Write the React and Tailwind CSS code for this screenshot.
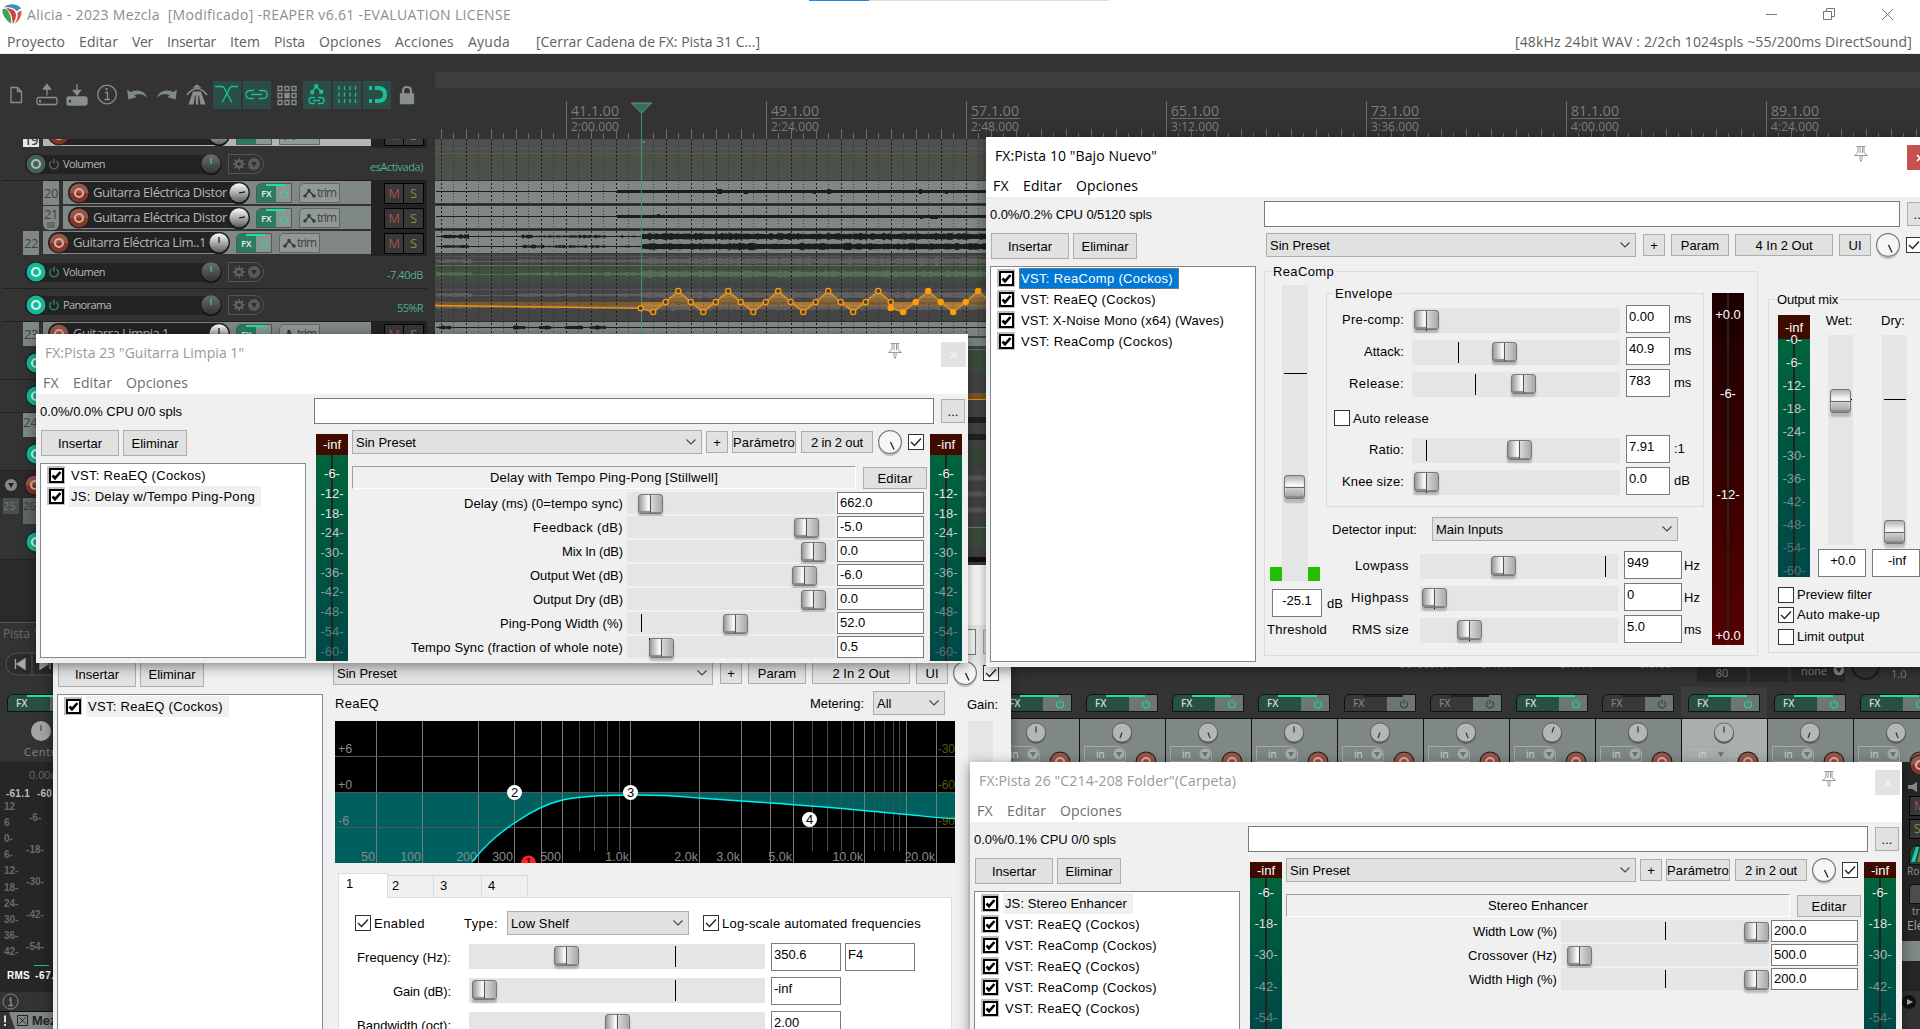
import React, { useLayoutEffect, useRef } from "react";

const ui = "font-['Open_Sans','Noto_Sans',sans-serif]";
const w32 = "font-['Liberation_Sans',Arial,sans-serif]";

/* Single-line text whose tracking is adjusted so that it spans w pixels. */
function T({ w, className = "", children }) {
  const ref = useRef(null);
  useLayoutEffect(() => {
    const el = ref.current;
    if (!w || !el) return;
    el.style.letterSpacing = "0px";
    const natural = el.getBoundingClientRect().width;
    el.style.letterSpacing = `${(w - natural) / el.textContent.length}px`;
  }, [w, children]);
  return (
    <span ref={ref} className={`inline-block shrink-0 whitespace-pre ${className}`}>
      {children}
    </span>
  );
}

function rng(seed) {
  let s = seed;
  return () => {
    s = (s * 16807) % 2147483647;
    return s / 2147483647;
  };
}

function wave(x0, x1, cy, amp, seed, min = 0.4) {
  const r = rng(seed);
  const top = [];
  const bottom = [];
  for (let x = x0; x <= x1; x += 2) {
    const a = amp * (min + (1 - min) * r() * r());
    top.push(`${x},${cy - a}`);
    bottom.unshift(`${x},${cy + a}`);
  }
  return [...top, ...bottom].join(" ");
}

/* ---------- Windows-style controls ---------- */

function Btn({ className = "", children }) {
  return (
    <button className={`flex shrink-0 items-center justify-center overflow-hidden border border-[#adadad] bg-[#e1e1e1] text-[13px] leading-none whitespace-nowrap text-black ${className}`}>
      {children}
    </button>
  );
}

function Select({ className = "", children }) {
  return (
    <div className={`flex h-6 shrink-0 items-center justify-between border border-[#adadad] bg-[#e1e1e1] pr-1 pl-[3px] text-[13px] leading-none text-black ${className}`}>
      {children}
      <svg className="h-3 w-3" viewBox="0 0 12 12" fill="none" stroke="#444" strokeWidth="1.1">
        <path d="M1.5 3.5 6 8l4.500-4.500" />
      </svg>
    </div>
  );
}

function Check({ on, className = "" }) {
  return (
    <span className={`flex h-4 w-4 shrink-0 items-center justify-center border border-[#333] bg-white ${className}`}>
      {on && (
        <svg className="h-[14px] w-[14px]" viewBox="0 0 14 14" fill="none" stroke="#222" strokeWidth="1.4">
          <path d="M2 7l3.500 3.500L12 3.500" />
        </svg>
      )}
    </span>
  );
}

function Field({ className = "", children }) {
  return (
    <div className={`shrink-0 border border-[#7a7a7a] bg-white pl-[2px] text-[13px] whitespace-nowrap text-black ${className}`}>
      {children}
    </div>
  );
}

function HSlider({ w, thumb, tick, className = "" }) {
  return (
    <div className={`relative shrink-0 bg-[#e5e5e5] ${className}`} style={{ width: w }}>
      {tick != null && <span className="absolute top-[2px] bottom-[2px] w-px bg-black" style={{ left: tick }} />}
      {thumb != null && (
        <span
          className="absolute top-[1.500px] flex h-[20px] w-[25px] rounded-[3px] border border-[#777] bg-linear-to-r from-[#9a9a9a] via-[#fafafa] via-40% to-[#a5a5a5] shadow-[0_3px_2px_rgba(0,0,0,0.22),inset_0_-2px_1px_#888]"
          style={{ left: thumb - 12.5 }}
        >
          <span className="ml-[11px] h-full w-px bg-[#555]" />
          <span className="my-[1px] flex-1 bg-linear-to-r from-[#d8d8d8] to-[#a8a8a8]" />
        </span>
      )}
    </div>
  );
}

function VSlider({ thumb, tick, className = "" }) {
  return (
    <div className={`relative shrink-0 bg-[#e5e5e5] ${className}`}>
      {tick != null && <span className="absolute right-[1px] left-[2px] h-px bg-black" style={{ top: tick }} />}
      {thumb != null && (
        <span
          className="absolute left-[2px] flex h-[24px] w-[21px] flex-col rounded-[3px] border border-[#777] bg-linear-to-b from-[#b0b0b0] via-[#fafafa] via-40% to-[#bbb] shadow-[0_4px_2px_rgba(0,0,0,0.2),inset_0_-2px_1px_#888]"
          style={{ top: thumb - 12 }}
        >
          <span className="mt-[11px] h-px w-full bg-[#666]" />
          <span className="mx-[1px] mb-[2px] flex-1 bg-linear-to-b from-[#d0d0d0] to-[#a8a8a8]" />
        </span>
      )}
    </div>
  );
}

function WetKnob() {
  return (
    <svg className="h-[28px] w-[26px] shrink-0" viewBox="0 0 26 28">
      <circle cx="13" cy="15.500" r="11.500" fill="#c4c4c4" />
      <circle cx="13" cy="13" r="11.400" fill="#f6f6f6" stroke="#777" strokeWidth="1.200" />
      <path d="M13.500 13l3.500 7.500" stroke="#222" strokeWidth="1.300" />
    </svg>
  );
}

const fade = ["#f0f0f0", "#e4e8e6", "#d8e0dd", "#bccbc8", "#aabfbb", "#94aeab", "#7f9d9a", "#6e8e8c", "#5f807e", "#527371"];

function Meter({ labels, infH, first, pitch, className = "", step = 1 }) {
  return (
    <div className={`relative flex w-8 shrink-0 flex-col overflow-hidden bg-linear-to-b from-[#00693a] via-[#00553f] via-50% to-[#004848] text-center text-[13px] leading-none ${className}`}>
      <div className="flex shrink-0 items-center justify-center bg-[#3f0a00] text-white" style={{ height: infH }}>
        -inf
      </div>
      <span className="absolute bottom-0 left-[15px] w-[2px] bg-[#222]" style={{ top: infH }} />
      <div className="relative flex flex-col" style={{ marginTop: first }}>
        {labels.map((l, i) => (
          <span key={l} className="flex shrink-0 items-center justify-center" style={{ height: pitch, color: fade[Math.min(9, i * step)] }}>
            {l}
          </span>
        ))}
      </div>
    </div>
  );
}

function Group({ title, className = "", children }) {
  return (
    <div className={`relative shrink-0 border border-[#dcdcdc] ${className}`}>
      <span className="absolute -top-[9px] left-[6px] bg-[#f0f0f0] px-[2px] text-[13px] leading-[17px] whitespace-nowrap">{title}</span>
      {children}
    </div>
  );
}

/* ---------- FX window shell ---------- */

function Pin() {
  return (
    <svg className="h-[18px] w-[16px]" viewBox="0 0 16 18" fill="none" stroke="#999" strokeWidth="1">
      <path d="M3.500 1.500h9M5 1.500v6L1.500 10.500h13L11 7.500v-6M7 2v6M9.500 2v6M7 10.500v4l1 2 1-2v-4" />
    </svg>
  );
}

function FxList({ items, selected, className = "" }) {
  return (
    <div className={`ml-1 w-[266px] shrink-0 border border-[#828790] bg-white pt-px ${className}`}>
      {items.map(([name, w], i) => (
        <div key={i} className="flex h-[21px] items-center pl-[6px]">
          <span className="mb-px flex h-[18px] w-[18px] items-center justify-center bg-[#c0c0c0]">
            <span className="flex h-[15px] w-[15px] items-center justify-center border-2 border-black bg-white">
              <svg className="h-[11px] w-[11px]" viewBox="0 0 11 11" fill="none" stroke="#000" strokeWidth="2.600">
                <path d="M1.500 5.500l2.500 2.700L9.500 2" />
              </svg>
            </span>
          </span>
          <span
            className={
              "ml-[4px] flex h-[21px] items-center pr-[6px] pb-px pl-[2px] text-[13px] leading-none " +
              (selected === i
                ? "bg-[#0078d7] text-white outline-1 -outline-offset-1 outline-dotted outline-[#d08030]"
                : selected === -i - 1
                  ? "bg-[#f0f0f0] text-black"
                  : "text-black")
            }
          >
            <T w={w}>{name}</T>
          </span>
        </div>
      ))}
    </div>
  );
}

function FxWindow({ title, titleW, active, closeX, searchW, cpu, cpuW, items, selected, listH, className, children, chrome = true }) {
  return (
    <section className={`absolute flex flex-col overflow-hidden bg-[#f0f0f0] text-black shadow-[0_3px_12px_rgba(0,0,0,0.45)] ${w32} ${className}`}>
      <header className={`h-[60px] shrink-0 bg-white text-[14px] leading-none ${ui} ${active ? "text-black" : "text-[#999]"}`}>
        {chrome && (
          <>
            <div className="flex h-[37px] items-start">
              <div className="flex h-[37px] w-[840px] shrink-0 items-center pl-[9px]">
                <T w={titleW}>{title}</T>
              </div>
              <div className="w-[16px] shrink-0 pt-[8px]" style={{ marginLeft: closeX - 905 }}>
                <Pin />
              </div>
              <span className={`mt-[8px] ml-[38px] flex h-[25px] w-[25px] shrink-0 items-center justify-center ${active ? "bg-[#c75050] text-white" : "bg-[#e2e2e2] text-[#f3f3f3]"}`}>
                <svg className="h-[8px] w-[8px]" viewBox="0 0 8 8" stroke="currentColor" strokeWidth="1.600">
                  <path d="M1 1l6 6M7 1L1 7" />
                </svg>
              </span>
            </div>
            <nav className={`flex h-[23px] items-center gap-[14px] pl-[7px] ${active ? "" : "text-[#6d6d6d]"}`}>
              <T w={16}>FX</T>
              <T w={39}>Editar</T>
              <T w={62}>Opciones</T>
            </nav>
          </>
        )}
      </header>
      <div className="flex min-h-0 flex-1">
        <div className="w-[278px] shrink-0">
          <div className="flex h-9 items-center pb-px pl-1 text-[13px] leading-none">
            <T w={cpuW}>{cpu}</T>
          </div>
          <div className="flex h-[26px] gap-1 pl-[5px]">
            <Btn className="w-[78px]">Insertar</Btn>
            <Btn className="w-[64px]">Eliminar</Btn>
          </div>
          <FxList items={items} selected={selected} className={`mt-[7px] ${listH}`} />
        </div>
        <div className="flex flex-1 flex-col pt-1">
          <div className="flex h-[26px] shrink-0 items-center">
            <div className={`h-[26px] shrink-0 border border-[#7a7a7a] bg-white ${searchW}`} />
            <Btn className="ml-[7px] h-6 w-6">...</Btn>
          </div>
          {children}
        </div>
      </div>
    </section>
  );
}

function JsBody({ title, titleW, rows, meter }) {
  return (
    <div className="flex">
      <Meter {...meter} className="mt-[10px] ml-[2px]" />
      <div className="mt-[6px] ml-1 w-[575px] shrink-0">
        <div className="flex h-6 items-center">
          <Select className="w-[350px]">Sin Preset</Select>
          <Btn className="ml-1 h-[22px] w-[22px]">+</Btn>
          <Btn className="ml-1 h-[22px] w-[64px]">
            <T w={62}>Parámetro</T>
          </Btn>
          <Btn className="ml-[5px] h-[22px] w-[72px]">
            <T w={52}>2 in 2 out</T>
          </Btn>
          <span className="ml-1 h-[26px]">
            <WetKnob />
          </span>
          <Check on className="ml-[5px]" />
        </div>
        <div className="mt-3 flex h-[23px]">
          <div className="flex w-[504px] items-center justify-center border border-t-[#a0a0a0] border-r-white border-b-white border-l-[#a0a0a0] text-[13px] leading-none">
            <T w={titleW}>{title}</T>
          </div>
          <Btn className="mt-px ml-[7px] h-[22px] w-[64px]">
            <T w={35}>Editar</T>
          </Btn>
        </div>
        <div className="mt-[3px] flex flex-col gap-[2px]">
          {rows.map(([label, w, thumb, value, tick]) => (
            <div key={label} className="flex h-[22px] text-[13px]">
              <span className="flex w-[271px] items-center justify-end leading-none">
                <T w={w}>{label}</T>
              </span>
              <HSlider w={208} thumb={thumb} tick={tick} className="ml-1 h-[22px]" />
              <Field className="ml-[2px] flex h-[22px] w-[87px] items-center">{value}</Field>
            </div>
          ))}
        </div>
      </div>
      <Meter {...meter} className="mt-[10px] ml-[3px]" />
    </div>
  );
}

function VstTopRow({ preset, io }) {
  return (
    <div className="mt-[6px] ml-[2px] flex h-6 shrink-0 items-center">
      <Select className={preset}>Sin Preset</Select>
      <Btn className="ml-[7px] h-[22px] w-[22px]">+</Btn>
      <Btn className="ml-[6px] h-[22px] w-[58px]">Param</Btn>
      <Btn className="ml-[6px] h-[22px] w-[98px]">{io}</Btn>
      <Btn className="ml-[6px] h-[22px] w-8">UI</Btn>
      <span className="ml-1 h-[26px]">
        <WetKnob />
      </span>
      <Check on className="ml-[5px]" />
    </div>
  );
}

/* ---------- ReaComp ---------- */

function EnvRow({ label, w, thumb, tick, value, unit }) {
  return (
    <div className="mb-1 flex h-7 text-[13px] leading-none">
      <span className="flex w-[77px] items-center justify-end">
        <T w={w}>{label}</T>
      </span>
      <HSlider w={208} thumb={thumb} tick={tick} className="mt-[3px] ml-2 h-[25px]" />
      <Field className="ml-[6px] w-[44px] pt-[4px]">{value}</Field>
      <span className="flex items-center pb-px pl-1">{unit}</span>
    </div>
  );
}

function PassRow({ label, w, thumb, tick, value, unit }) {
  return (
    <div className="mb-1 flex h-7 text-[13px] leading-none">
      <span className="flex w-[83px] items-center justify-end">
        <T w={w}>{label}</T>
      </span>
      <HSlider w={198} thumb={thumb} tick={tick} className="mt-[3px] ml-[11px] h-[25px]" />
      <Field className="ml-[6px] w-[58px] pt-[4px]">{value}</Field>
      <span className="flex items-center pl-[2px]">{unit}</span>
    </div>
  );
}

function MixCol({ label, thumb, tick, value }) {
  return (
    <div className="flex w-12 shrink-0 flex-col items-center text-[13px] leading-none">
      <span className="mt-[14px] h-[21px] pr-[6px]">{label}</span>
      <VSlider thumb={thumb} tick={tick} className="mr-[3px] h-[210px] w-[25px]" />
      <Field className="mt-1 h-7 w-12 pt-[4px] text-center">{value}</Field>
    </div>
  );
}

function ReaComp() {
  return (
    <>
      <VstTopRow preset="w-[370px]" io="4 In 2 Out" />
      <div className="flex shrink-0">
        <Group title={<T w={61}>ReaComp</T>} className="mt-[14px] flex h-[385px] w-[494px]">
          <div className="w-[61px] shrink-0 text-[13px] leading-none">
            <div className="mt-[13px] ml-[5px] flex items-end">
              <span className="h-[14px] w-3 bg-[#22c000]" />
              <VSlider thumb={202} tick={88} className="h-[296px] w-[26px]" />
              <span className="h-[14px] w-3 bg-[#22c000]" />
            </div>
            <div className="mt-2 ml-[7px] flex h-7 w-[80px]">
              <Field className="w-[50px] pt-[4px] pr-[2px] text-center">-25.1</Field>
              <span className="pt-[8px] pl-[5px]">dB</span>
            </div>
            <div className="flex h-6 items-center pl-[2px]">
              <T w={60}>Threshold</T>
            </div>
          </div>
          <div className="w-[378px] shrink-0">
            <Group title={<T w={58}>Envelope</T>} className="mt-[21px] h-[214px] pt-[11px]">
              <EnvRow label="Pre-comp:" w={62} thumb={14.5} tick={14} value="0.00" unit="ms" />
              <EnvRow label="Attack:" w={40} thumb={92.5} tick={46} value="40.9" unit="ms" />
              <EnvRow label="Release:" w={55} thumb={111} tick={63} value="783" unit="ms" />
              <div className="flex h-[34px] items-center gap-[3px] pl-[7px] text-[13px] leading-none">
                <Check />
                <T w={76}>Auto release</T>
              </div>
              <EnvRow label="Ratio:" w={35} thumb={107} tick={14} value="7.91" unit=":1" />
              <EnvRow label="Knee size:" w={62} thumb={14} tick={14} value="0.0" unit="dB" />
            </Group>
            <div className="mt-[10px] mb-[10px] flex h-6 items-center pl-[6px] text-[13px] leading-none">
              <T w={85}>Detector input:</T>
              <Select className="ml-[15px] w-[246px]">
                <T w={67}>Main Inputs</T>
              </Select>
            </div>
            <PassRow label="Lowpass" w={54} thumb={83} tick={185} value="949" unit="Hz" />
            <PassRow label="Highpass" w={58} thumb={14} tick={14} value="0" unit="Hz" />
            <PassRow label="RMS size" w={57} thumb={49} tick={49} value="5.0" unit="ms" />
          </div>
          <div className="relative mt-[21px] ml-2 flex h-[352px] w-8 flex-col items-center bg-linear-to-b from-[#1c0000] to-[#560000] text-[13px] leading-none text-white">
            <span className="absolute inset-y-0 left-[15px] w-[2px] bg-[#222]" />
            <span className="relative mt-[15px]">+0.0</span>
            <span className="relative mt-[66px]">-6-</span>
            <span className="relative mt-[88px]">-12-</span>
            <span className="relative mt-[128px]">+0.0</span>
          </div>
        </Group>
        <Group title={<T w={61}>Output mix</T>} className="mt-[42px] ml-[10px] h-[354px] w-[220px]">
          <div className="flex">
            <Meter
              className="mt-[15px] ml-[9px] h-[262px]"
              infH={24}
              first={-11}
              pitch={23.1}
              labels={["-0-", "-6-", "-12-", "-18-", "-24-", "-30-", "-36-", "-42-", "-48-", "-54-", "-60-"]}
            />
            <span className="w-2" />
            <MixCol label="Wet:" thumb={66} tick={64} value="+0.0" />
            <span className="w-[6px]" />
            <MixCol label="Dry:" thumb={197} tick={64} value="-inf" />
          </div>
          <div className="mt-[10px] ml-[9px] text-[13px] leading-none">
            <div className="flex h-5 items-start gap-[3px]">
              <Check />
              <T w={75} className="pt-px">Preview filter</T>
            </div>
            <div className="flex h-[22px] items-start gap-[3px]">
              <Check on />
              <T w={83} className="pt-px">Auto make-up</T>
            </div>
            <div className="flex items-start gap-[3px]">
              <Check />
              <T w={67} className="pt-px">Limit output</T>
            </div>
          </div>
        </Group>
      </div>
    </>
  );
}

/* ---------- ReaEQ ---------- */

const vLong = [376.5, 422.5, 478.5, 514.5, 541.5, 562.5, 630.5, 699.5, 741.5, 770.5, 793.5, 864.5, 906.5, 936.5];
const vShort = [579.5, 594.5, 607.5, 619.5, 812.5, 827.5, 841.5, 853.5, 874.5, 884.5, 893.5, 899.5];
const freqs = [[375, "50"], [421, "100"], [477, "200"], [513, "300"], [561, "500"], [629, "1.0k"], [698, "2.0k"], [740, "3.0k"], [792, "5.0k"], [863, "10.0k"], [935, "20.0k"]];
const eqCurve = "M472 862 C488 842 500 833 514.500 823 S545 804 562.500 800 S600 795.500 631 795 S680 796.500 699 798 S750 801.500 771 803 S820 806.500 842 808.500 S890 813 907 814.500 S940 818.500 955 818.500";

function EqGraph() {
  return (
    <svg className="block h-[142px] w-[620px]" viewBox="335 721 620 142" fontFamily="Liberation Sans, sans-serif" fontSize="12">
      <rect x="335" y="721" width="620" height="142" fill="#000" />
      <path d={`${eqCurve} V792.500 H335 V863 H472Z`} fill="#006060" />
      <g stroke="#7a7a7a" strokeWidth="1">
        {vLong.map((x) => (
          <path key={x} d={`M${x} 721V863`} />
        ))}
      </g>
      <g stroke="#4a4a4a" strokeWidth="1">
        {vShort.map((x) => (
          <path key={x} d={`M${x} 721V851`} />
        ))}
      </g>
      <path d="M335 756.500H955M335 792.500H955M335 827.500H955" stroke="#555" />
      <g fill="#888" fontSize="12.500">
        <text x="338" y="753">+6</text>
        <text x="338" y="789">+0</text>
        <text x="338" y="825">-6</text>
        {freqs.map(([x, l]) => (
          <text key={l} x={x} y="861" textAnchor="end">{l}</text>
        ))}
      </g>
      <g fill="#57570c" textAnchor="end">
        <text x="955" y="753">-30</text>
        <text x="955" y="789">-60</text>
        <text x="955" y="825">-90</text>
      </g>
      <path d={eqCurve} fill="none" stroke="#00f0f0" strokeWidth="1.400" />
      <circle cx="528.500" cy="863" r="7.500" fill="#f22" />
      <text x="528.500" y="867" textAnchor="middle" fill="#000">1</text>
      {[[514.5, 792.5, 2], [630.5, 792.5, 3], [809.5, 819.5, 4]].map(([x, y, n]) => (
        <g key={n}>
          <circle cx={x} cy={y} r="7.500" fill="#fff" />
          <text x={x} y={y + 4.5} textAnchor="middle" fontSize="13" fill="#000">{n}</text>
        </g>
      ))}
    </svg>
  );
}

function EqRow({ label, w, thumb, tick, value, note }) {
  return (
    <div className="mb-[6px] flex h-7 shrink-0 leading-none">
      <span className="flex w-[112px] items-center justify-end">
        <T w={w}>{label}</T>
      </span>
      <HSlider w={296} thumb={thumb} tick={tick} className="mt-px ml-[18px] h-[25px]" />
      <Field className="ml-[6px] w-[70px] pt-[4px]">{value}</Field>
      {note && <Field className="ml-1 w-[70px] pt-[4px]">{note}</Field>}
    </div>
  );
}

function ReaEq() {
  return (
    <>
      <VstTopRow preset="w-[380px]" io="2 In 2 Out" />
      <div className="flex text-[13px] leading-none">
        <div className="w-[624px] shrink-0 pl-1">
          <div className="mt-[6px] flex h-6 items-center">
            <T w={44}>ReaEQ</T>
            <span className="flex-1" />
            <T w={54}>Metering:</T>
            <Select className="mr-[10px] ml-[9px] w-[72px]">All</Select>
          </div>
          <div className="mt-[6px]">
            <EqGraph />
          </div>
          <div className="mt-[10px] ml-[3px] flex h-6 items-end">
            <span className="relative z-10 -mb-px h-[25px] w-[50px] border border-b-0 border-[#dcdcdc] bg-white pt-[3px] pl-[7px]">1</span>
            <span className="h-[22px] w-[46px] border border-b-0 border-l-0 border-[#d9d9d9] pt-[3px] pl-1">2</span>
            <span className="h-[22px] w-[48px] border border-b-0 border-l-0 border-[#d9d9d9] pt-[3px] pl-[6px]">3</span>
            <span className="h-[22px] w-[46px] border border-b-0 border-l-0 border-[#d9d9d9] pt-[3px] pl-[6px]">4</span>
          </div>
          <div className="ml-[3px] h-[200px] w-[614px] border border-[#dcdcdc] bg-white pt-[13px]">
            <div className="mb-2 flex h-6 items-center pl-4">
              <Check on />
              <T w={51} className="ml-[3px]">Enabled</T>
              <T w={34} className="ml-[39px]">Type:</T>
              <Select className="ml-[9px] w-[182px]">
                <T w={58}>Low Shelf</T>
              </Select>
              <Check on className="ml-[14px]" />
              <T w={199} className="ml-[3px]">Log-scale automated frequencies</T>
            </div>
            <EqRow label="Frequency (Hz):" w={94} thumb={97.5} tick={206} value="350.6" note="F4" />
            <EqRow label="Gain (dB):" w={58} thumb={15} tick={206} value="-inf" />
            <EqRow label="Bandwidth (oct):" w={94} thumb={148} value="2.00" />
          </div>
        </div>
        <div className="pl-3">
          <div className="mt-[13px] h-[23px]">
            <T w={31}>Gain:</T>
          </div>
          <div className="ml-px h-[330px] w-[25px] bg-[#e5e5e5]" />
        </div>
      </div>
    </>
  );
}

/* ---------- Main window: title, menu, toolbar ---------- */

function Logo() {
  return (
    <svg className="h-[21px] w-[20px]" viewBox="0 0 20 21">
      <path d="M.5 5.500C2 4.300 4.500 4.800 6 7c2 3 3.500 7 3.200 12.500C5 17.500-.5 11 .5 5.500Z" fill="#3fa257" />
      <path d="M4 4.200C9 4 14 6 14 11c0 4-1.800 7-3.200 9C10.500 14 9.500 8 4 4.200Z" fill="#c2473f" />
      <path d="M12.500 20c4.500-3 7.500-8 7-13.500-1.500.5-3 1.200-4 2.200.5 4-.8 8-3 11.300Z" fill="#d05a4c" />
      <path d="M2 3.500C6-.8 15-1 19.200 4.500 17.500 5 16 6 14.800 7.300 12 3.500 7 2.500 2 3.500Z" fill="#3f8db9" />
    </svg>
  );
}

function TopBars() {
  return (
    <div className={`h-[54px] shrink-0 border-b border-[#ececec] bg-white text-[14px] leading-none text-[#606060] ${ui}`}>
      <div className="flex h-[29px] items-center pl-[2px] text-[#8d8d8d]">
        <Logo />
        <T w={484} className="ml-[5px]">{"Alicia - 2023 Mezcla  [Modificado] -REAPER v6.61 -EVALUATION LICENSE"}</T>
        <span className="ml-[298px] h-px w-[60px] self-start bg-[#2b86d9]" />
        <span className="h-px w-[240px] self-start bg-[#ddd]" />
        <span className="flex-1" />
        <svg className="mr-[26px] mb-px h-[13px] w-[128px]" viewBox="0 0 128 13" fill="none" stroke="#777" strokeWidth="1">
          <path d="M0 6.500h11M57.500 3.500h8v8h-8zM60.500 3.500v-3h8v8h-3M116 1l11 11M127 1l-11 11" />
        </svg>
      </div>
      <div className="flex h-[25px] items-center gap-[14px] pr-[8px] pl-[7px]">
        {[["Proyecto", 58], ["Editar", 39], ["Ver", 21], ["Insertar", 49], ["Item", 30], ["Pista", 31], ["Opciones", 62], ["Acciones", 59], ["Ayuda", 42]].map(([l, w]) => (
          <T key={l} w={w}>{l}</T>
        ))}
        <T w={224} className="ml-[12px]">[Cerrar Cadena de FX: Pista 31 C...]</T>
        <span className="flex-1" />
        <T w={397}>[48kHz 24bit WAV : 2/2ch 1024spls ~55/200ms DirectSound]</T>
      </div>
    </div>
  );
}

const tools = [
  [<path d="M9 7.500h6.500l4 4V22.500H9zM15.500 7.500v4h4" />],
  [<g><path d="M5 19.500q0-2 2-2h16q2 0 2 2v3q0 2-2 2H7q-2 0-2-2z" /><path d="M15 15.500V5M11.500 9L15 4.500 18.500 9z" fill="#888f8d" /><path d="M8 20v2.500" strokeWidth="2" /></g>],
  [<g><path d="M5 19q0-2 2-2h16q2 0 2 2v4q0 2-2 2H7q-2 0-2-2z" fill="#888f8d" /><path d="M15 4v9M11.500 10.500L15 15l3.500-4.500z" fill="#888f8d" /><path d="M8 20v2.500" stroke="#333" strokeWidth="2" /></g>],
  [<g><circle cx="15" cy="14.500" r="9.300" /><path d="M13 12.500h2.500v7M12.500 19.500h5.500" /><path d="M14.500 8v2" strokeWidth="2" /></g>],
  [<path d="M5 9.500l1.500 10 8.500-2.500-3-1.500q6.500-4 13.500 2-5-10-17-5.500z" fill="#7e8886" stroke="none" />],
  [<path d="M25 9.500l-1.500 10-8.500-2.500 3-1.500q-6.500-4-13.500 2 5-10 17-5.500z" fill="#7e8886" stroke="none" />],
  [<g><path d="M11 11.500h8l4.500 13h-5l-1.500-9h-.8v9h-2.400v-9H13l-1.500 9h-5z" fill="#888f8d" stroke="none" /><path d="M5 15q10-13 20 0" fill="none" strokeWidth="1.500" /><path d="M12.500 7l2.500-2 2.500 2z" fill="#888f8d" /></g>],
  [<path d="M3 6.500h7q2 0 4 5l6 11M26 6.500h-6q-2 0-4 5l-6 11" />, 1],
  [<path d="M12 10.500H8q-4 0-4 4t4 4h4M17 10.500h4q4 0 4 4t-4 4h-4M9 14.500h11" />, 1],
  [<g><path d="M6 6.500h4v4H6zM13 6.500h4v4h-4zM20 6.500h4v4h-4zM6 13.500h4v4H6zM20 13.500h4v4h-4zM6 20.500h4v4H6zM13 20.500h4v4h-4zM20 20.500h4v4h-4z" /><path d="M13 13.500h4v4h-4z" fill="#888f8d" /></g>],
  [<g><path d="M10 12l4-5.500 5 4.500" /><path d="M13 5h2.500v2.500H13zM9 11h2.500v2.500H9zM18 10.500h2.500V13H18z" fill="#1abf9c" /><path d="M13 17.500h-3q-3 0-3 3t3 3h3M16 17.500h3q3 0 3 3t-3 3h-3M11 20.500h7" /></g>, 1],
  [<path d="M7 6v18M12.500 6v18M18 6v18M23.500 6v18" strokeDasharray="4 2.500" />, 1],
  [<g><path d="M13 8h3q7 0 7 6.500T16 21h-3" strokeWidth="4" /><path d="M7 8h3M7 21h3" strokeWidth="4" /></g>, 1],
  [<g><path d="M8.500 14h13v9.500h-13z" fill="#888f8d" /><path d="M11 14v-3q0-4 4-4t4 4v3" strokeWidth="2.200" /></g>],
];

function Toolbar() {
  return (
    <div className="flex h-[85px] shrink-0 items-start gap-[2px] pt-[27px] pl-[3px]">
      {tools.map(([icon, on], i) => (
        <span key={i} className={`flex h-[28px] w-[28px] items-center justify-center ${on ? "bg-[#2b4d45]" : ""}`}>
          <svg className="h-[28px] w-[28px]" viewBox="1 1 28 28" fill="none" stroke={on ? "#1abf9c" : "#888f8d"} strokeWidth="1.300">
            {icon}
          </svg>
        </span>
      ))}
    </div>
  );
}

/* ---------- Track control panel ---------- */

function RecDot({ tone = "red" }) {
  const c = { red: ["#803628", "#e2a99b"], teal: ["#14b897", "#d6f5ed"], dim: ["#45605a", "#a8bdb7"] }[tone];
  return (
    <svg className="h-[22px] w-[22px] shrink-0" viewBox="0 0 22 22">
      <circle cx="11" cy="11" r="10.500" fill="#1c1c1c" />
      <circle cx="11" cy="11" r="9.500" fill={c[0]} />
      {tone === "red" && <path d="M1.500 11a9.500 9.500 0 0 1 19 0z" fill="#fff" opacity="0.16" />}
      <circle cx="11" cy="11" r="4" fill="none" stroke={c[1]} strokeWidth="2.200" />
    </svg>
  );
}

function Power({ color, className = "h-[12px] w-[12px]" }) {
  return (
    <svg className={`shrink-0 ${className}`} viewBox="0 0 12 12" fill="none" stroke={color} strokeWidth="1.300">
      <path d="M3.500 3a4.300 4.300 0 1 0 5 0M6 .8v5" />
    </svg>
  );
}

function Knob({ dark, angle = 0 }) {
  return (
    <svg className="h-[22px] w-[22px] shrink-0" viewBox="0 0 22 22">
      <defs>
        <linearGradient id="knobLight" x1="0" y1="0" x2="0" y2="1">
          <stop offset="0" stopColor="#fff" />
          <stop offset="1" stopColor="#5a5a5a" />
        </linearGradient>
        <linearGradient id="knobDark" x1="0" y1="0" x2="0" y2="1">
          <stop offset="0" stopColor="#6a706e" />
          <stop offset="1" stopColor="#333" />
        </linearGradient>
      </defs>
      <circle cx="11" cy="12" r="10.400" fill="#151515" />
      <circle cx="11" cy="10.800" r="9.600" fill={dark ? "url(#knobDark)" : "url(#knobLight)"} />
      <path d="M11 5v6" stroke={dark ? "#3fc9ae" : "#111"} strokeWidth="1.200" transform={`rotate(${angle} 11 11)`} />
    </svg>
  );
}

function FxBtn() {
  return (
    <span className="flex h-5 w-9 shrink-0 flex-col overflow-hidden rounded-tl-[5px] border border-[#4f5a57] bg-[#8d9593]">
      <span className="flex h-full">
        <span className="flex w-[19px] items-center justify-center bg-[#2b7a62] pt-[2px] text-[9px] leading-none font-semibold text-white/90">FX</span>
        <span className="-ml-[10px] h-[2px] w-[19px] bg-[#12e896]" />
        <span className="-ml-[9px] flex flex-1 items-center justify-center pt-[2px]">
          <Power color="#3fc9a6" className="h-[10px] w-[10px]" />
        </span>
      </span>
    </span>
  );
}

function TrimBtn() {
  return (
    <span className="flex h-5 w-[41px] shrink-0 items-center rounded-tl-[5px] border border-[#5f6866] bg-[#909997] pl-[3px] text-[12px] leading-none text-[#3c4442]">
      <svg className="h-[10px] w-[13px]" viewBox="0 0 13 10" fill="none" stroke="#333b39" strokeWidth="1.500">
        <path d="M2 8l4-5 5 5" />
        <circle cx="2" cy="8" r="1" />
        <circle cx="6" cy="2.500" r="1" />
        <circle cx="11" cy="8" r="1" />
      </svg>
      <T w={19} className="ml-px">trim</T>
    </span>
  );
}

function MS() {
  return (
    <div className="flex h-full w-[56px] shrink-0 items-center bg-[#232323] pl-[13px] text-[13px] leading-none">
      <span className="flex h-[21px] w-5 items-center justify-center border border-black bg-[#383838] text-[#a5504c]">M</span>
      <span className="flex h-[21px] w-5 items-center justify-center border border-l-0 border-black bg-[#383838] text-[#8c8c3e]">S</span>
    </div>
  );
}

function Track({ n, name, w, indent, angle = 0, light, folder }) {
  return (
    <div className="flex h-[25px] shrink-0 overflow-hidden">
      <span className={`shrink-0 ${indent ? "w-[43px]" : "w-[23px]"}`} />
      <span
        className={`flex h-6 w-4 shrink-0 flex-col items-center text-[13px] leading-none text-[#3d4543] ${folder ? "rounded-b-[6px]" : ""} ${
          light ? "justify-end bg-[#e8e8e8] font-semibold" : "justify-center bg-[#7f8886]"
        }`}
      >
        <T w={14}>{n}</T>
        {folder && <span className="mt-[1px] h-[6px] w-[8px] rounded-[1px] bg-[#626b69]" />}
      </span>
      <div className={`ml-1 flex h-[23px] shrink-0 items-center ${indent ? "w-[308px]" : "w-[328px]"} ${light ? "bg-[#b0b6b4]" : "bg-[#7f8886]"}`}>
        <div className="ml-[5px] flex h-[21px] w-[182px] shrink-0 items-center rounded-[10px] bg-[#232323] text-[13px] leading-none text-[#b5b5b5]">
          <RecDot />
          <span className="ml-[3px] flex w-[135px] items-center">
            <T w={w}>{name}</T>
          </span>
          <Knob angle={angle} />
        </div>
        <span className="ml-[6px]">
          <FxBtn />
        </span>
        <span className="ml-[7px]">
          <TrimBtn />
        </span>
      </div>
      <MS />
    </div>
  );
}

function EnvTrack({ name, w, value, vw, tone, h }) {
  return (
    <div className={`ml-[2px] flex shrink-0 items-center border-b border-[#202020] ${h} w-[425px]`}>
      <div className="ml-[23px] flex h-[19px] w-[197px] items-center rounded-[9px] bg-[#232323] text-[11px] leading-none text-[#b8b8b8]">
        <RecDot tone={tone} />
        <Power color={tone === "dim" ? "#666" : "#2c8f78"} className="ml-px h-[12px] w-[12px]" />
        <T w={w} className="mb-[2px] ml-[3px]">{name}</T>
        <span className="flex-1" />
        <Knob dark />
      </div>
      <span className="ml-[6px] flex h-5 w-9 shrink-0 items-center justify-center gap-[3px] rounded-r-[10px] border border-[#555]">
        <svg className="h-[12px] w-[12px]" viewBox="0 0 12 12" fill="none" stroke="#666">
          <circle cx="6" cy="6" r="3" strokeWidth="1.800" />
          <path d="M6 0v2M6 10v2M0 6h2M10 6h2M1.800 1.800l1.400 1.400M8.800 8.800l1.400 1.400M1.800 10.200l1.400-1.400M8.800 3.200l1.400-1.400" strokeWidth="1.500" />
        </svg>
        <svg className="h-[12px] w-[12px]" viewBox="0 0 12 12">
          <circle cx="6" cy="6" r="6" fill="#5a5a5a" />
          <path d="M3 4h6L6 9z" fill="#2e2e2e" />
        </svg>
      </span>
      <span className="flex flex-1 justify-end pt-[4px] pr-[4px] text-[11px] leading-none text-[#4fae99]">
        <T w={vw}>{value}</T>
      </span>
    </div>
  );
}

function SideDot({ tone, h }) {
  return (
    <div className={`flex shrink-0 items-center border-b border-[#222] pl-[25px] ${h}`}>
      <RecDot tone={tone} />
    </div>
  );
}

function TrackPanel() {
  return (
    <div className="flex h-[484px] shrink-0 flex-col overflow-hidden border-b border-[#555]">
      <div className="flex h-[9px] shrink-0 flex-col justify-end overflow-hidden">
        <Track n="19" name="" light />
      </div>
      <EnvTrack name="Volumen" w={42} value="esActivada)" vw={53} tone="dim" h="h-[33px]" />
      <Track n="20" indent name="Guitarra Eléctrica Distor" w={134} angle={80} />
      <Track n="21" indent name="Guitarra Eléctrica Distor" w={134} angle={80} folder />
      <Track n="22" name="Guitarra Eléctrica Lim..1" w={133} />
      <EnvTrack name="Volumen" w={42} value="-7.40dB" vw={36} tone="teal" h="h-[33px]" />
      <EnvTrack name="Panorama" w={48} value="55%R" vw={26} tone="teal" h="h-[33px]" />
      <Track n="23" name="Guitarra Limpia 1" w={96} />
      <SideDot tone="teal" h="h-[33px]" />
      <SideDot tone="teal" h="h-[33px]" />
      <div className="flex h-[24px] pl-[23px]">
        <span className="w-4 bg-[#7f8886] text-[13px] text-[#3d4543]">24</span>
      </div>
      <SideDot tone="teal" h="h-[34px]" />
      <div className="flex h-[27px] items-center gap-[2px] bg-[#2a2a2a] pl-[4px]">
        <svg className="h-[14px] w-[14px]" viewBox="0 0 14 14">
          <circle cx="7" cy="7" r="6" fill="#888" />
          <path d="M4 5h6L7 10z" fill="#222" />
        </svg>
        <span className="ml-[4px]">
          <RecDot />
        </span>
      </div>
      <div className="flex h-[26px] pl-[3px] text-[11px] text-[#777]">
        <span className="h-4 w-4 bg-[#4a504e]">25</span>
        <span className="ml-[4px] h-[26px] w-4 bg-[#5f6866] text-[#333]">26</span>
      </div>
      <SideDot tone="teal" h="h-[36px]" />
      <div className="flex-1 bg-[#2a2a2a]" />
    </div>
  );
}

/* ---------- Ruler and arrange lanes ---------- */

const marks = [["41.1.00", "2:00.000"], ["49.1.00", "2:24.000"], ["57.1.00", "2:48.000"], ["65.1.00", "3:12.000"], ["73.1.00", "3:36.000"], ["81.1.00", "4:00.000"], ["89.1.00", "4:24.000"]];

function Ruler() {
  const tall = Array.from({ length: 60 }, (_, i) => 6.5 + 25 * i);
  return (
    <div className="relative h-[85px] shrink-0 overflow-hidden">
      <div className="mt-[18px] h-[16px] bg-[#3d3d3d]" />
      <div className="mt-[13px] flex h-[38px] pl-[131px]">
        {marks.map(([bar, time]) => (
          <div key={bar} className="w-[200px] shrink-0 border-l border-[#6d6d6d] pl-[4px] leading-none text-[#7c7c7c]">
            <div className="flex h-[18px] w-[49px] items-center border-b border-[#6d6d6d] pt-[3px] text-[14px]">
              <T w={48}>{bar}</T>
            </div>
            <div className="flex h-[16px] items-center text-[12px]">
              <T w={48}>{time}</T>
            </div>
          </div>
        ))}
      </div>
      <svg className="absolute bottom-0 left-0 h-[10px] w-[1485px]" viewBox="0 0 1485 10" stroke="#6d6d6d">
        {tall.map((x) => (
          <path key={x} d={`M${x} 0V10M${x + 12} 4V10`} />
        ))}
      </svg>
      <svg className="absolute top-[48px] left-[196px] h-[37px] w-[22px]" viewBox="0 0 22 37">
        <path d="M.5 1h20L10.500 11z" fill="#2f7163" stroke="#8a8a8a" />
        <path d="M10.500 11v26" stroke="#3d9383" />
      </svg>
    </div>
  );
}

const panPts = (() => {
  const p = [[640.7, 308.3]];
  for (let k = 0; k < 7; k++) {
    const b = 653.2 + 50 * k;
    if (k === 5) p.push([890.7, 308]);
    p.push([b, 312], [b + 12.5, 302], [b + 25, 291], [b + 37.5, 302]);
  }
  return p;
})();

function Lanes() {
  const dark = "#1c1e1e";
  const cols = Array.from({ length: 22 }, (_, i) => 441.5 + 25 * i);
  const line = panPts.map(([x, y]) => `${x},${y}`).join(" ");
  return (
    <svg className="block h-[484px] w-[551px]" viewBox="435 139 551 484">
      <rect x="435" y="139" width="551" height="484" fill="#444" />
      <rect x="435" y="139" width="551" height="41" fill="#4f4f4f" />
      <rect x="435" y="153" width="551" height="20" fill="#4b5149" />
      <path d="M435 148.500H986" stroke="#5a5a5a" />
      <path d="M435 153.500H986" stroke="#4d6249" />
      <g fill="none" stroke="#4d6249">
        <circle cx="602.500" cy="153" r="2.600" />
        <circle cx="640.500" cy="153" r="2.600" />
      </g>
      {[181, 206, 231].map((y) => (
        <g key={y}>
          <rect x="435" y={y} width="551" height="22" fill="#7f8886" />
          <path d={`M435 ${y + 23.5}H986`} stroke="#222" strokeWidth="1.500" />
        </g>
      ))}
      <path d="M435 180.500H986" stroke="#333" />
      <path d="M436 191.500H617M436 216.500H617M436 236.500H986M436 246.500H986" stroke={dark} />
      <path d="M617 191.500H986M617 216.500H986" stroke={dark} strokeWidth="3.200" />
      <path d="M717 189h5v5h-5zM744 191h4v3h-4zM813 191h3v3h-3zM827 189h4v5h-4zM919 189h3v5h-3zM945 191h3v3h-3zM657 214h3v3h-3zM920 216h3v3h-3zM930 216h8v3h-8z" fill={dark} />
      {[236.5, 246.5].map((y, i) => (
        <g key={y} fill={dark}>
          <polygon points={wave(441, 470, y, 3, 7 + i, 0.3)} />
          <polygon points={wave(521, 546, y, 3, 17 + i, 0.2)} />
          <polygon points={wave(546, 606, y, 2.6, 27 + i, 0.2)} />
          <polygon points={wave(620, 642, y, 1.6, 37 + i, 0.2)} />
          <polygon points={wave(642, 986, y, 4.2, 47 + i, 0.55)} />
        </g>
      ))}
      <rect x="435" y="254" width="551" height="67" fill="#444" />
      <rect x="435" y="265" width="551" height="17" fill="#3e4f3f" />
      {[[261, "#606060"], [274, "#5b6b5b"], [295, "#606060"], [307, "#606060"]].map(([y, c], i) => (
        <g key={y} fill={c}>
          <rect x="436" y={y} width="550" height="1" />
          <polygon points={wave(436, 472, y, 3, 57 + i, 0.4)} />
          <polygon points={wave(517, 642, y, 2.6, 67 + i, 0.4)} />
          <polygon points={wave(642, 986, y, 4.4, 77 + i, 0.5)} />
        </g>
      ))}
      <path d="M435 265.500H986" stroke="#4e7c4c" />
      <path d="M435 256.500H986M435 289.500H986" stroke="#555" />
      <rect x="435" y="302" width="551" height="4.500" fill="#b07420" opacity="0.45" />
      <rect x="435" y="322" width="551" height="14" fill="#7f8886" />
      <path d="M435 321.500H986" stroke="#2d2d2d" />
      <path d="M436 327.500H986" stroke={dark} />
      {[[439, 452], [513, 525], [539, 551], [565, 584], [590, 607]].map(([a, b], i) => (
        <polygon key={a} points={wave(a, b, 327.5, 2.6, 90 + i, 0.5)} fill={dark} />
      ))}
      <rect x="968" y="338" width="18" height="8" fill="#7f8886" />
      <rect x="968" y="349" width="18" height="24" fill="#3e4f3f" />
      <path d="M968 349.500H986" stroke="#4e7c4c" />
      <rect x="968" y="393" width="18" height="6" fill="#7a5a2a" />
      <path d="M968 399.500H986" stroke="#f0920f" />
      <path d="M968 420H986M968 437H986" stroke="#222" strokeWidth="6" />
      <rect x="968" y="449" width="18" height="20" fill="#3a463c" />
      <path d="M968 478H986M968 494H986M968 510H986" stroke="#5a5a5a" strokeWidth="5" />
      <rect x="968" y="528" width="18" height="20" fill="#3e4f3f" />
      <path d="M968 527.500H986" stroke="#4e9c4c" />
      <path d="M968 559.500H986" stroke="#111" strokeWidth="5" />
      <g stroke="#1a1a1a" strokeDasharray="2 2">
        {cols.map((x) => (
          <path key={x} d={`M${x} 139V336`} />
        ))}
      </g>
      <g stroke="#2a2a2a" strokeDasharray="1 2" opacity="0.7">
        {cols.map((x) => (
          <path key={x} d={`M${x + 12} 139V336`} />
        ))}
      </g>
      <path d="M641.500 139V336" stroke="#3d9383" />
      <rect x="641" y="141" width="4" height="2" fill="#3d9383" />
      <polygon points={`641,302 ${line} 986,302`} fill="#ffa22a" opacity="0.38" />
      <polyline points={`435,305.500 ${line}`} fill="none" stroke="#f0920f" strokeWidth="1.400" />
      {panPts.map(([x, y], i) => (
        <circle key={i} cx={x} cy={y} r="2.600" fill={x > 890 && !(x < 892 && y < 305) ? "#ff9c0a" : "#4a4238"} stroke="#ff9c0a" strokeWidth="1.300" />
      ))}
    </svg>
  );
}

/* ---------- Mixer ---------- */

const strips = [[1, 0], [1, 200], [1, 160], [1, 0], [0, 200], [0, 160], [1, 20], [0, 0], [1, 0, 1], [1, 200], [1, 160]];

function MixFx({ on }) {
  return (
    <span className={`ml-[7px] flex h-[18px] w-[72px] shrink-0 overflow-hidden rounded-tl-[6px] border border-[#121212] ${on ? "bg-[#294f45]" : "bg-[#383838]"}`}>
      <span className={`flex w-[19px] shrink-0 items-center pl-[8px] text-[10px] leading-none font-semibold ${on ? "text-[#cfd6d4]" : "text-[#7e7e7e]"}`}>FX</span>
      <span className={`relative z-10 h-[2px] w-[39px] shrink-0 ${on ? "bg-[#12e896]" : "bg-[#222]"}`} />
      <span className="-ml-[16px] flex w-[28px] shrink-0 items-center justify-center bg-[#6c7674]">
        <Power color={on ? "#1fd6a0" : "#3a3f3e"} className="mt-px ml-[6px] h-[10px] w-[10px]" />
      </span>
    </span>
  );
}

function Strip({ on, angle, selected }) {
  return (
    <div className={`flex w-[86px] shrink-0 flex-col ${selected ? "bg-[#3c3c3c]" : ""}`}>
      <div className="flex h-[32px] items-start pt-[7px]">
        <MixFx on={on} />
      </div>
      <div className={`flex h-[46px] flex-col overflow-hidden border-t border-l border-[#111] ${selected ? "bg-[#a9afad]" : "bg-[#7f8886]"}`}>
        <svg className="mt-[3px] ml-[31px] h-[22px] w-[22px] shrink-0" viewBox="0 0 22 22">
          <circle cx="11" cy="12" r="10" fill="#5c6462" />
          <circle cx="11" cy="10.500" r="9.600" fill="#b4b7b6" stroke="#4d5553" strokeWidth="0.800" />
          <path d="M11 4.500v6" stroke="#333" strokeWidth="1.200" transform={`rotate(${angle} 11 10.5)`} />
        </svg>
        <div className="flex items-start pl-[4px]">
          <span className="mt-[2px] flex h-[16px] w-[42px] items-center rounded-tr-[9px] border border-[#a3a9a7] pl-[11px] text-[10px] leading-none text-[#d5d8d7]">
            in
            <svg className="ml-[8px] h-[12px] w-[12px]" viewBox="0 0 12 12">
              <circle cx="6" cy="6" r="5.500" fill="#a7adab" />
              <path d="M3 4h6L6 9z" fill="#6c7472" />
            </svg>
          </span>
          <span className="mt-[7px] ml-[9px]">
            <RecDot />
          </span>
        </div>
      </div>
    </div>
  );
}

function MasterStrip() {
  const scale = ["12", "6", "0-", "6-", "12-", "18-", "24-", "30-", "36-", "42-"];
  return (
    <div className="flex w-[53px] shrink-0 flex-col overflow-hidden text-[11px] leading-none text-[#999]">
      <div className="flex h-[75px] shrink-0 flex-col">
        <div className="flex pt-[7px]">
          <MixFx on />
        </div>
        <svg className="mt-[8px] ml-[30px] h-[22px] w-[22px] shrink-0" viewBox="0 0 22 22">
          <circle cx="11" cy="11" r="10" fill="#a5a5a5" />
          <path d="M11 5v6" stroke="#333" />
        </svg>
        <T w={34} className="mt-[4px] ml-[24px] text-[#888]">Centro</T>
      </div>
      <div className="flex h-[230px] shrink-0 flex-col bg-[#262626] font-['Liberation_Sans',sans-serif] text-[10px] font-bold text-[#6a6a6a]">
        <span className="mt-[8px] ml-[29px] text-[11px] font-normal">0.00dB</span>
        <span className="mt-[8px] flex gap-[7px] pl-[6px] whitespace-nowrap text-[#bcbcbc]">
          <T w={24}>-61.1</T>
          <T w={24}>-60.3</T>
        </span>
        <div className="flex">
          <div className="flex w-[24px] flex-col pl-[4px]">
            {scale.map((s, i) => (
              <span key={i} className="flex h-[16.100px] items-center">{s}</span>
            ))}
          </div>
          <div className="mt-[6px] flex w-[22px] flex-col items-center">
            {["-6-", "-18-", "-30-", "-42-", "-54-"].map((s) => (
              <span key={s} className="flex h-[32.200px] shrink-0 items-start pt-[8px]">{s}</span>
            ))}
          </div>
        </div>
        <span className="-mt-px ml-[34px] h-px w-[15px] bg-[#12d080]" />
        <span className="mt-[5px] flex gap-[5px] pl-[7px] whitespace-nowrap text-white">
          <T w={23}>RMS</T>
          <T w={26}>-67.2</T>
        </span>
      </div>
      <div className="flex h-[19px] shrink-0 items-center pl-[2px]">
        <svg className="h-[17px] w-[17px]" viewBox="0 0 17 17" fill="none" stroke="#8a8a8a">
          <circle cx="8.500" cy="8.500" r="7.500" />
          <path d="M7 7h2v5M6.500 12.500h4.500M8.500 4v2" strokeWidth="1.300" />
        </svg>
      </div>
      <div className="flex flex-1 items-center border-t border-[#111] bg-[#7f8886] font-['Liberation_Sans',sans-serif] text-[13px] font-bold text-[#222]">
        <svg className="h-full w-[16px] shrink-0" viewBox="0 0 16 17" preserveAspectRatio="none">
          <path d="M0 0h9l6 17H0z" fill="#333" />
          <path d="M5 3.500v7M5 12v2" stroke="#ddd" strokeWidth="2" />
        </svg>
        <svg className="ml-px h-[11px] w-[11px] shrink-0" viewBox="0 0 11 11" fill="none" stroke="#222">
          <path d="M.5.5h10v10H.5zM2.500 2.500l6 6M8.500 2.500l-6 6" />
        </svg>
        <span className="ml-[4px]">Mezcla</span>
      </div>
    </div>
  );
}

function RightStrip() {
  const cell = "flex h-[20px] w-[20px] shrink-0 items-center border border-black bg-[#383838] pl-[4px] text-[12px]";
  return (
    <div className="flex h-[267px] w-[18px] flex-col bg-[#262626] pl-[5px] text-[10px] leading-none text-[#999]">
      <span className="-mt-[8px] ml-[2px] flex">
        <RecDot />
      </span>
      <svg className="mt-[6px] h-[10px] w-[12px] shrink-0" viewBox="0 0 12 10">
        <path d="M1 3h4l5-3v10L5 7H1z" fill="#888" />
      </svg>
      <span className={`mt-[4px] ml-[2px] text-[#a5504c] ${cell}`}>M</span>
      <span className={`mt-[3px] ml-[2px] text-[#8c8c3e] ${cell}`}>S</span>
      <svg className="mt-[6px] ml-[2px] h-[20px] w-[18px] shrink-0" viewBox="0 0 18 20">
        <path d="M4 .5h14v19H.5V6z" fill="#26453d" stroke="#111" />
        <path d="M2 17L7 2h3L6 17z" fill="#18d1ac" />
        <path d="M8 17l4-15h5v15z" fill="#7c7440" />
      </svg>
      <span className="mt-px">Rout</span>
      <span className="mt-[8px] ml-[2px] h-[20px] w-[20px] shrink-0 rounded-tl-[5px] border border-[#111] bg-[#4a504e]" />
      <span className="mt-[2px] ml-[5px]">trim</span>
      <span className="mt-[4px] text-[12px] whitespace-nowrap text-[#aaa]">Eléc</span>
      <span className="mt-[9px] -ml-[5px] h-[20px] shrink-0 bg-[#7f8886]" />
      <span className="mt-[30px] -ml-[5px] flex-1 bg-[#333] pt-[4px]">
        <svg className="h-[14px] w-[14px]" viewBox="0 0 14 14">
          <circle cx="7" cy="7" r="7" fill="#111" />
          <path d="M5 4l6 3-6 3z" fill="#aaa" />
        </svg>
      </span>
    </div>
  );
}

function Dock() {
  return (
    <div className="flex h-[406px] flex-col bg-[#333]">
      <div className="flex h-[64px] shrink-0 text-[11px] leading-none text-[#888]">
        <div className="w-[1400px] shrink-0">
          <div className="h-[22px] pt-[5px] pl-[3px] text-[12px] text-[#6d6d6d]">Pista 19</div>
          <svg className="mt-[7px] ml-[4px] h-[26px] w-[60px]" viewBox="0 0 60 26">
            <path d="M13 1h47v22H13A11 11 0 0 1 13 1zM28 1v22" fill="#2b2b2b" stroke="#555" />
            <path d="M11.500 7v10M21 7v10l-8-5zM36 7v10l8-5zM46 7v10" fill="#aaa" stroke="#aaa" strokeWidth="1.300" />
          </svg>
        </div>
        <div className="flex w-[297px] shrink-0 gap-[24px] pt-[35px] text-[#999]">
          <T w={57}>selección:</T>
          <T w={33}>8.1.14</T>
          <T w={33} className="ml-[22px]">8.1.14</T>
          <T w={33} className="ml-[22px]">0.0.00</T>
        </div>
        <span className="flex h-[59px] w-[50px] items-end justify-center bg-[#272727] pb-[4px]">80</span>
        <span className="ml-[3px] h-[59px] w-[38px] bg-[#272727]" />
        <span className="ml-[3px] flex h-[59px] w-[54px] items-end gap-[6px] bg-[#272727] pb-[6px] pl-[10px]">
          none
          <svg className="h-[12px] w-[12px]" viewBox="0 0 12 12">
            <circle cx="6" cy="6" r="5.500" fill="#888" />
            <path d="M3 4h6L6 9z" fill="#222" />
          </svg>
        </span>
        <span className="mt-[28px] ml-[6px] h-[29px] w-[29px] rounded-full border-2 border-[#1d1d1d]" />
        <span className="pt-[45px] pl-[11px]">1.0</span>
      </div>
      <div className="flex min-h-0 flex-1">
        <MasterStrip />
        <span className="w-[940px] shrink-0" />
        <div className="w-[927px]">
          <div className="flex h-[75px] w-[927px] overflow-hidden">
            {strips.map(([on, angle, sel], i) => (
              <Strip key={i} on={on} angle={angle} selected={sel} />
            ))}
          </div>
          <div className="flex justify-end">
            <RightStrip />
          </div>
        </div>
      </div>
    </div>
  );
}

export default function App() {
  return (
    <div className="relative h-[1029px] w-[1920px] overflow-hidden bg-[#333]">
      <div className={`flex h-full flex-col ${ui}`}>
        <TopBars />
        <div className="flex h-[569px] shrink-0">
          <div className="w-[435px] shrink-0">
            <Toolbar />
            <TrackPanel />
          </div>
          <div className="flex-1">
            <Ruler />
            <Lanes />
          </div>
        </div>
        <Dock />
      </div>

      <FxWindow
        className="top-[565px] left-[53px] h-[480px] w-[958px]"
        title=""
        chrome={false}
        searchW="w-[645px]"
        cpu=""
        items={[["VST: ReaEQ (Cockos)", 135]]}
        selected={-1}
        listH="h-[360px]"
      >
        <ReaEq />
      </FxWindow>

      <FxWindow
        className="top-[137px] left-[986px] h-[530px] w-[960px]"
        title={'FX:Pista 10 "Bajo Nuevo"'}
        titleW={162}
        active
        closeX={932}
        searchW="w-[636px]"
        cpu="0.0%/0.2% CPU 0/5120 spls"
        cpuW={162}
        items={[["VST: ReaComp (Cockos)", 152], ["VST: ReaEQ (Cockos)", 135], ["VST: X-Noise Mono (x64) (Waves)", 203], ["VST: ReaComp (Cockos)", 152]]}
        selected={0}
        listH="h-[396px]"
      >
        <ReaComp />
      </FxWindow>

      <FxWindow
        className="top-[334px] left-[36px] h-[329px] w-[932px]"
        title={'FX:Pista 23 "Guitarra Limpia 1"'}
        titleW={199}
        closeX={916}
        searchW="w-[620px]"
        cpu="0.0%/0.0% CPU 0/0 spls"
        cpuW={142}
        items={[["VST: ReaEQ (Cockos)", 135], ["JS: Delay w/Tempo Ping-Pong", 184]]}
        selected={-2}
        listH="h-[195px]"
      >
        <JsBody
          title="Delay with Tempo Ping-Pong [Stillwell]"
          titleW={228}
          meter={{ infH: 21, first: 9, pitch: 19.7, labels: ["-6-", "-12-", "-18-", "-24-", "-30-", "-36-", "-42-", "-48-", "-54-", "-60-"] }}
          rows={[
            ["Delay (ms) (0=tempo sync)", 159, 23, "662.0"],
            ["Feedback (dB)", 90, 179, "-5.0"],
            ["Mix In (dB)", 61, 186, "0.0"],
            ["Output Wet (dB)", 93, 177, "-6.0"],
            ["Output Dry (dB)", 90, 186, "0.0"],
            ["Ping-Pong Width (%)", 123, 108, "52.0", 14],
            ["Tempo Sync (fraction of whole note)", 212, 34, "0.5", 22],
          ]}
        />
      </FxWindow>

      <FxWindow
        className="top-[762px] left-[970px] h-[300px] w-[932px]"
        title={'FX:Pista 26 "C214-208 Folder"(Carpeta)'}
        titleW={257}
        closeX={916}
        searchW="w-[620px]"
        cpu="0.0%/0.1% CPU 0/0 spls"
        cpuW={142}
        items={[["JS: Stereo Enhancer", 122], ["VST: ReaEQ (Cockos)", 135], ["VST: ReaComp (Cockos)", 152], ["VST: ReaEQ (Cockos)", 135], ["VST: ReaComp (Cockos)", 152], ["VST: ReaEQ (Cockos)", 135]]}
        selected={-1}
        listH="h-[200px]"
      >
        <JsBody
          title="Stereo Enhancer"
          titleW={100}
          meter={{ infH: 16, first: -1, pitch: 31.2, step: 2, labels: ["-6-", "-18-", "-30-", "-42-", "-54-"] }}
          rows={[
            ["Width Low (%)", 84, 195, "200.0", 104],
            ["Crossover (Hz)", 89, 18, "500.0"],
            ["Width High (%)", 88, 195, "200.0", 104],
          ]}
        />
      </FxWindow>
    </div>
  );
}
